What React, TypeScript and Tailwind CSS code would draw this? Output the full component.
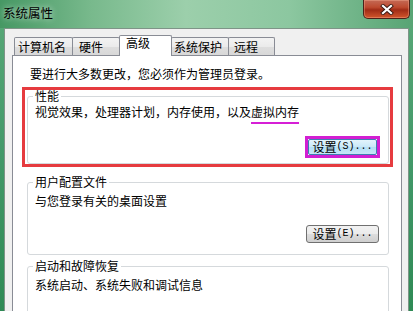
import React from 'react';

const TABS = [
  { label: '计算机名', w: 'w-[59px]', pl: 'pl-[3px]' },
  { label: '硬件', w: 'w-[48px]', pl: 'pl-[6px]' },
  { label: '高级', w: 'w-[53px]', pl: 'pl-[6px]', active: true },
  { label: '系统保护', w: 'w-[58px]', pl: 'pl-[2px]' },
  { label: '远程', w: 'w-[47px]', pl: 'pl-[5px]' },
];

function CloseButton() {
  return (
    <div className="mr-[3px] flex h-[19px] w-[47px] items-center justify-center rounded-b-[5px] border border-t-0 border-[#4b2219] bg-[linear-gradient(180deg,#c46a56_0%,#bd4a30_40%,#a02c16_55%,#d2562c_100%)] shadow-[inset_0_0_0_1px_rgba(255,190,160,0.35)]">
      <svg width="14" height="11" viewBox="0 0 14 11">
        <path d="M3 2 L11 9 M11 2 L3 9" stroke="#3a1a12" strokeWidth="4" strokeLinecap="square" />
        <path d="M3 2 L11 9 M11 2 L3 9" stroke="#ffffff" strokeWidth="2.2" strokeLinecap="square" />
      </svg>
    </div>
  );
}

function WinButton({ accel, hover }: { accel: string; hover?: boolean }) {
  return (
    <div
      className={
        hover
          ? 'flex h-[16px] w-[69px] items-center justify-center rounded-[2px] border border-[#3c7fb1] bg-[linear-gradient(180deg,#e3f4fc_0%,#c8e8f8_50%,#b3dff5_51%,#c4e6f7_100%)]'
          : 'flex h-[18px] w-[73px] items-center justify-center rounded-[3px] border border-[#707070] bg-[linear-gradient(180deg,#f2f2f2_0%,#ebebeb_50%,#dddddd_51%,#cfcfcf_100%)]'
      }
    >
      <span className="leading-[14px]">设置</span>
      <span className="font-['Liberation_Mono',monospace] text-[10px] leading-[14px]">({accel})...</span>
    </div>
  );
}

export default function App() {
  return (
    <div className="flex h-[311px] w-[413px] flex-col overflow-hidden bg-[linear-gradient(180deg,#5aa978_0%,#43996a_50%,#2f8a55_100%)] font-['Noto_Sans_CJK_SC','Noto_Sans_CJK_JP',sans-serif] text-[12px] text-black">
      <div className="flex h-[28px] shrink-0 justify-between bg-[linear-gradient(90deg,#469864_0%,#78b98c_22%,#9ccfab_45%,#8cc7a0_70%,#58a474_100%)]">
        <span className="pl-[3px] pt-[5px] text-[12.5px] leading-[16px] [text-shadow:0_0_6px_rgba(255,255,255,0.8)]">
          系统属性
        </span>
        <CloseButton />
      </div>

      <div className="mx-[4px] flex flex-1 flex-col border-x border-t border-[#7f9488] bg-[#f0f0f0] pl-[7px] pt-[6px]">
        <div className="flex h-[20px] items-end pl-[2px]">
          {TABS.map((t, i) =>
            t.active ? (
              <div
                key={t.label}
                className={`relative z-10 -mb-[1px] -ml-[1px] h-[21px] ${t.w} ${t.pl} rounded-t-[2px] border-x border-t border-[#898c95] bg-white leading-[14px]`}
              >
                {t.label}
              </div>
            ) : (
              <div
                key={t.label}
                className={`${i > 0 ? '-ml-[1px]' : ''} h-[18px] ${t.w} ${t.pl} rounded-t-[2px] border-x border-t border-[#898c95] bg-[linear-gradient(180deg,#f3f3f3_0%,#ebebeb_50%,#dedede_51%,#d8d8d8_100%)] pt-[1px] leading-[16px]`}
              >
                {t.label}
              </div>
            ),
          )}
        </div>

        <div className="flex w-[390px] flex-1 flex-col border border-[#898c95] bg-white pl-[14px] pr-[12px] pt-[10px]">
          <p className="pl-[3px] leading-[16px]">要进行大多数更改，您必须作为管理员登录。</p>

          <div className="-ml-[5px] -mr-[4px] mt-[5px] border-[3px] border-[#e63b3f] pl-[2px] pr-[1px]">
            <fieldset className="rounded-[3px] border border-[#d5d9dc] pb-[5px] pl-[5px] pr-[8px]">
              <legend className="px-[2px] leading-[12px]">性能</legend>
              <p className="mt-[2px] pl-[2px] leading-[16px]">
                视觉效果，处理器计划，内存使用，以及
                <span className="underline decoration-[#d61fd6] decoration-2 underline-offset-[5px]">虚拟内存</span>
              </p>
              <div className="mt-[16px] flex justify-end">
                <div className="border-[3px] border-[#d21fd2]">
                  <WinButton accel="S" hover />
                </div>
              </div>
            </fieldset>
          </div>

          <fieldset className="mt-[9px] rounded-[3px] border border-[#d5d9dc] pb-[11px] pl-[5px] pr-[9px]">
            <legend className="px-[2px] leading-[12px]">用户配置文件</legend>
            <p className="mt-[5px] pl-[2px] leading-[16px]">与您登录有关的桌面设置</p>
            <div className="mt-[16px] flex justify-end">
              <WinButton accel="E" />
            </div>
          </fieldset>

          <fieldset className="mt-[5px] rounded-[3px] border border-[#d5d9dc] pb-[11px] pl-[5px] pr-[9px]">
            <legend className="px-[2px] leading-[12px]">启动和故障恢复</legend>
            <p className="mt-[5px] pl-[2px] leading-[16px]">系统启动、系统失败和调试信息</p>
            <div className="mt-[18px] flex justify-end">
              <WinButton accel="T" />
            </div>
          </fieldset>
        </div>
      </div>
    </div>
  );
}
